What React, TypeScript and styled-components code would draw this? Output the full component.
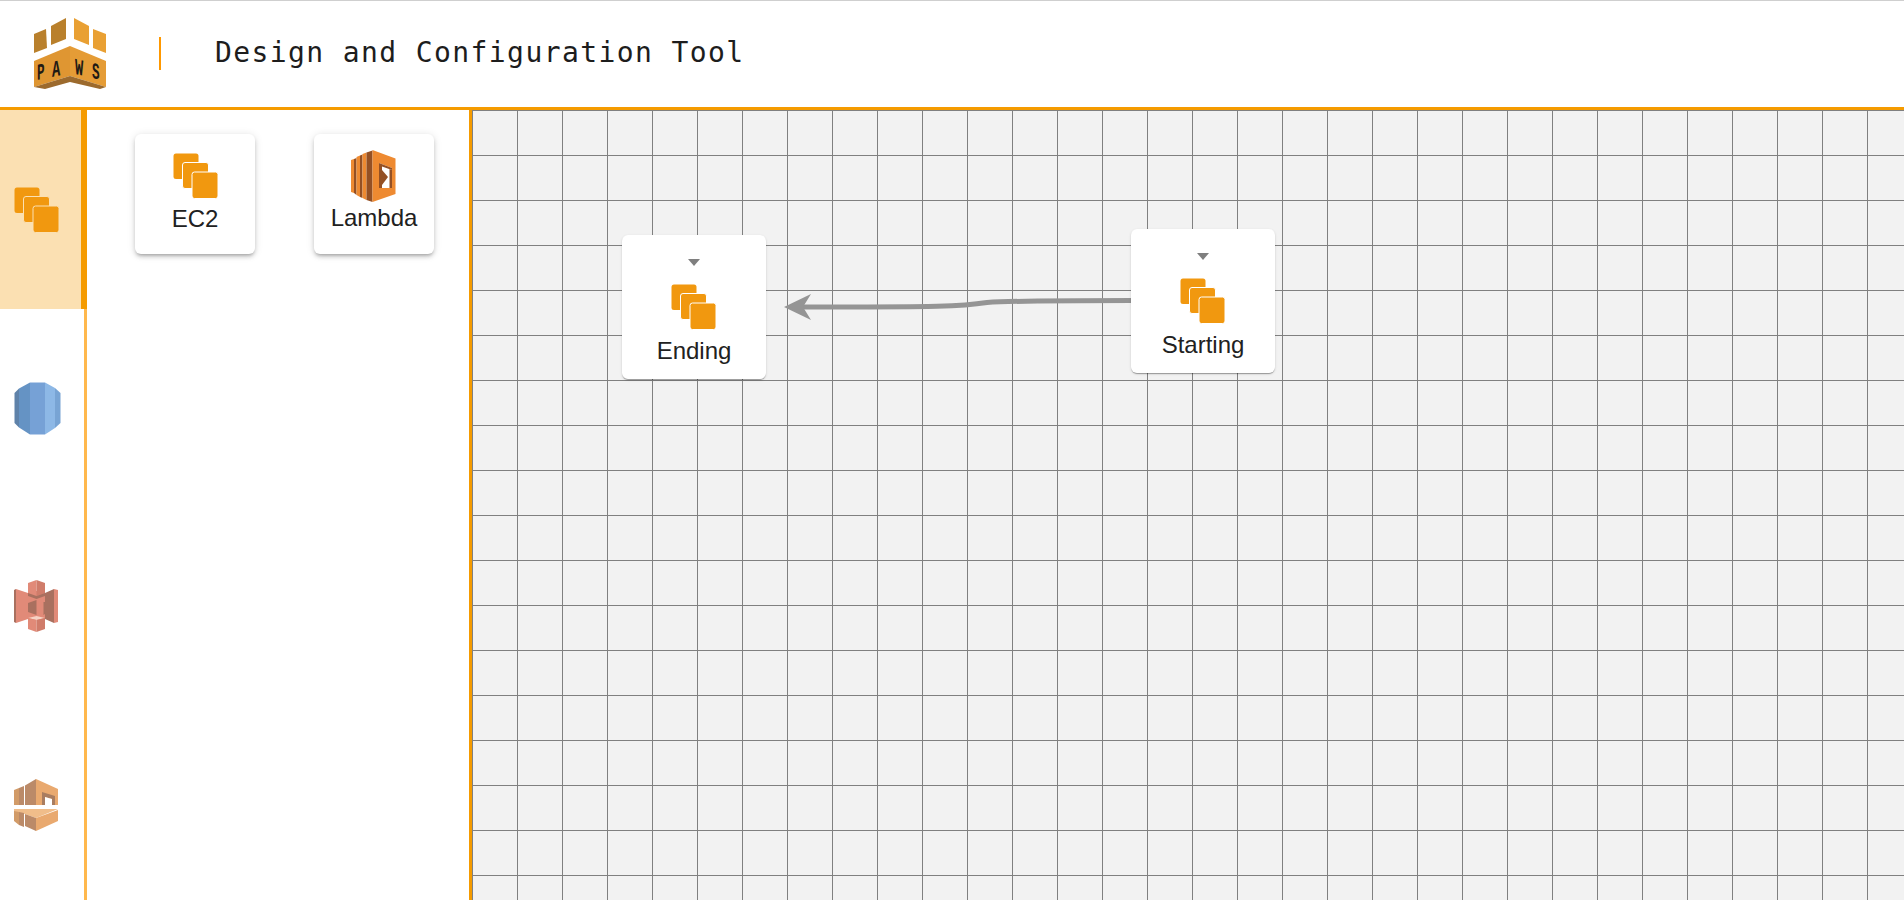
import React from "react";
import styled, { createGlobalStyle } from "styled-components";

const Global = createGlobalStyle`
  html, body { margin: 0; padding: 0; height: 100%; background: #fff; overflow: hidden; }
  #root { height: 100%; }
`;

const Page = styled.div`
  display: flex;
  flex-direction: column;
  height: 900px;
  width: 1904px;
  overflow: hidden;
`;

const Header = styled.header`
  flex: none;
  box-sizing: border-box;
  height: 110px;
  display: flex;
  align-items: center;
  padding: 0 0 0 34px;
  border-top: 1px solid #cfcfcf;
  border-bottom: 3px solid #f59b00;
  background: #fff;
`;

const LogoWrap = styled.div`
  width: 72px;
  height: 71px;
  margin-top: -2px;
`;

const Divider = styled.div`
  width: 2px;
  height: 33px;
  margin: -2px 0 0 53px;
  background: #ff9800;
`;

const Title = styled.h1`
  margin: -4px 0 0 54px;
  font: 400 28px "DejaVu Sans Mono", "Liberation Mono", monospace;
  color: #1d1d1d;
  white-space: nowrap;
  letter-spacing: 1.4px;
`;

const Body = styled.div`
  flex: 1;
  display: flex;
  min-height: 0;
`;

const Sidebar = styled.nav`
  flex: none;
  width: 87px;
  display: flex;
  flex-direction: column;
`;

const Tab = styled.div<{ $active?: boolean }>`
  flex: none;
  box-sizing: border-box;
  height: 198.7px;
  display: flex;
  align-items: center;
  padding-left: 14px;
  padding-top: ${(p) => (p.$active ? "2px" : "0")};
  background: ${(p) => (p.$active ? "#fbe0b2" : "#fff")};
  border-right: ${(p) => (p.$active ? "6px solid #f59b00" : "3px solid #ffb84d")};
`;

const Panel = styled.aside`
  flex: none;
  box-sizing: border-box;
  width: 382px;
  display: flex;
  align-items: flex-start;
  gap: 59px;
  padding: 24px 0 0 48px;
  background: #fff;
`;

const Tile = styled.div`
  flex: none;
  box-sizing: border-box;
  width: 120px;
  height: 120px;
  display: flex;
  flex-direction: column;
  align-items: center;
  padding-top: 19px;
  border-radius: 6px;
  background: #fff;
  box-shadow: 0 3px 3px -2px rgba(0, 0, 0, 0.2), 0 3px 4px 0 rgba(0, 0, 0, 0.14), 0 1px 8px 0 rgba(0, 0, 0, 0.12);
`;

const IconBox = styled.div`
  height: 45px;
  display: flex;
  align-items: flex-start;
  justify-content: center;
`;

const TileIconBox = styled(IconBox)`
  margin-left: 1px;
`;

const LambdaIconBox = styled(IconBox)`
  margin-top: -3px;
  height: 48px;
`;

const Label = styled.div<{ $gap: number }>`
  margin-top: ${(p) => p.$gap}px;
  font: 400 24px/28px "Liberation Sans", Arial, sans-serif;
  color: #212121;
`;

const Canvas = styled.main`
  flex: 1;
  position: relative;
  min-width: 0;
  overflow: hidden;
  border-left: 3px solid #f59b00;
  background-color: #f2f2f2;
  background-image:
    linear-gradient(to right, #808080 1px, transparent 1px),
    linear-gradient(to bottom, #808080 1px, transparent 1px);
  background-size: 45px 45px;
`;

const Wire = styled.svg`
  position: absolute;
  inset: 0;
  width: 100%;
  height: 100%;
`;

const Node = styled.div<{ $x: number; $y: number }>`
  position: absolute;
  left: ${(p) => p.$x}px;
  top: ${(p) => p.$y}px;
  box-sizing: border-box;
  width: 144px;
  height: 144px;
  display: flex;
  flex-direction: column;
  align-items: center;
  padding-top: 24px;
  border-radius: 6px;
  background: #fff;
  box-shadow: 0 2px 1px -1px rgba(0, 0, 0, 0.2), 0 1px 1px 0 rgba(0, 0, 0, 0.14), 0 1px 3px 0 rgba(0, 0, 0, 0.12);
`;

const Caret = styled.div`
  width: 0;
  height: 0;
  margin-bottom: 18px;
  border-left: 6px solid transparent;
  border-right: 6px solid transparent;
  border-top: 7px solid #7f7f7f;
`;

const Ec2Icon = ({ gap = "#fff" }: { gap?: string }) => (
  <svg width="46" height="46" viewBox="0 0 46 46">
    <rect x="0.5" y="0.5" width="25" height="25.5" rx="2.5" fill="#f1980f" />
    <rect x="9.5" y="9.5" width="26" height="26" rx="2.5" fill="#f1980f" stroke={gap} strokeWidth="1" />
    <rect x="19" y="19" width="26" height="26.5" rx="2.5" fill="#f1980f" stroke={gap} strokeWidth="1" />
  </svg>
);

const LambdaIcon = () => (
  <svg width="46" height="54" viewBox="0 0 46 54">
    <polygon points="0,10 3,9 3,43 0,42" fill="#ee8a31" />
    <polygon points="3,9 5.5,8 5.5,45 3,43" fill="#945024" />
    <polygon points="5.5,7 9,5.5 9,47 5.5,45" fill="#ee8a31" />
    <polygon points="9,5.5 11.5,4.5 11.5,48 9,47" fill="#945024" />
    <polygon points="11.5,4 15.5,2.5 15.5,50 11.5,48" fill="#ee8a31" />
    <polygon points="15.5,2.5 21.5,0.5 21.5,52 15.5,50" fill="#945024" />
    <polygon points="21.5,0 44.5,8.5 44.5,44 21.5,52" fill="#ee8a31" />
    <polygon points="28,13 41,18 41,38 28,38" fill="#fff" />
    <polygon points="28,13 41,18 41,20 31,16.5 31,38 28,38" fill="#945024" />
    <polygon points="38.5,19 41,20 41,38 38.5,38" fill="#945024" />
    <polygon points="31,20 37,27 31,35" fill="#945024" />
  </svg>
);

const RdsIcon = () => (
  <svg width="47" height="53" viewBox="0 0 47 53">
    <polygon points="0.5,11 5,6.5 5,45.5 0.5,41" fill="#5f82a9" />
    <polygon points="5,6.5 16,0.5 16,52.5 5,45.5" fill="#6593c4" />
    <polygon points="16,0.5 31,0.5 31,52.5 16,52.5" fill="#76a1d6" />
    <polygon points="31,0.5 41,6 41,46 31,52.5" fill="#8db8e6" />
    <polygon points="41,6 46.5,11 46.5,41 41,46" fill="#78a4d4" />
  </svg>
);

const S3Icon = () => (
  <svg width="46" height="54" viewBox="0 1 46 54">
    <polygon points="0,11 2,10 2,44 0,43" fill="#a9705f" />
    <polygon points="2,10 14,14 14,40 2,44" fill="#e18a78" />
    <polygon points="14,12 31,12 31,41 14,41" fill="#e18a78" />
    <polygon points="14,4 22.5,1 22.5,17 14,14" fill="#e18a78" />
    <polygon points="22.5,1 31,4 31,14 22.5,17" fill="#d07c6a" />
    <polygon points="14,14 22.5,17 31,14 31,17 22.5,20 14,17" fill="#a9705f" />
    <polygon points="14,24 22.5,21 22.5,36 14,33" fill="#a9705f" />
    <polygon points="29.5,23 31,23 31,35 29.5,36" fill="#a9705f" />
    <polygon points="31,14 40,10 40,44 31,40" fill="#a9705f" />
    <polygon points="40,10 44,11 44,43 40,44" fill="#e18a78" />
    <polygon points="14,39 22.5,37 31,39 22.5,41" fill="#f6d2c4" />
    <polygon points="14,39 22.5,41 22.5,53 14,50" fill="#e18a78" />
    <polygon points="22.5,41 31,39 31,50 22.5,53" fill="#d07c6a" />
  </svg>
);

const GatewayIcon = () => (
  <svg width="46" height="54" viewBox="0 0 46 54">
    <polygon points="0,12 5,10 5,27 0,27" fill="#d29b68" />
    <polygon points="5,10 10,8 10,27 5,27" fill="#bb8a68" />
    <polygon points="11,7.5 22,1 22,27 11,27" fill="#bb8a68" />
    <polygon points="22,1 44,11 44,27 22,27" fill="#e9a96f" />
    <polygon points="28,14 41,18 41,27 38,27 38,21 31,19 31,27 28,27" fill="#a97d60" />
    <polygon points="31,19 38,21 38,27 31,27" fill="#fff" />
    <polygon points="0,31 44,31 22,40 11,36 0,34" fill="#f0bd8a" />
    <polygon points="0,33 5,34 5,47 0,43" fill="#d29b68" />
    <polygon points="5,34 10,35 10,49 5,47" fill="#bb8a68" />
    <polygon points="11,36 22,40 22,53 11,48" fill="#bb8a68" />
    <polygon points="22,40 44,32 44,43 22,53" fill="#e9a96f" />
  </svg>
);

const Logo = () => (
  <svg width="72" height="71" viewBox="0 0 72 71">
    <polygon points="0,16 12,11 13,30 0,35" fill="#b9802c" />
    <polygon points="17,8 32,0 32,21 17,27" fill="#b9802c" />
    <polygon points="40,0 55,8 55,27 40,21" fill="#e9a033" />
    <polygon points="59,11 72,16 72,35 59,30" fill="#e9a033" />
    <polygon points="36,28 0,43 0,69 36,58" fill="#df9632" />
    <polygon points="36,28 72,43 72,69 36,58" fill="#e59c36" />
    <polygon points="0,69 36,58 72,69 66,71 36,64 11,71" fill="#9c6a2d" />
    <g fontFamily="'Liberation Mono', monospace" fontWeight="700" fill="#1f1a14" fontSize="23">
      <text transform="translate(3,62) skewY(-12) scale(0.55,1)">P</text>
      <text transform="translate(18,59) skewY(-12) scale(0.6,1)">A</text>
      <text transform="translate(41,56) skewY(12) scale(0.6,1)">W</text>
      <text transform="translate(58,60) skewY(12) scale(0.55,1)">S</text>
    </g>
  </svg>
);

const App = () => (
  <Page>
    <Global />
    <Header>
      <LogoWrap>
        <Logo />
      </LogoWrap>
      <Divider />
      <Title>Design and Configuration Tool</Title>
    </Header>
    <Body>
      <Sidebar>
        <Tab $active>
          <Ec2Icon gap="#fbe0b2" />
        </Tab>
        <Tab>
          <RdsIcon />
        </Tab>
        <Tab>
          <S3Icon />
        </Tab>
        <Tab>
          <GatewayIcon />
        </Tab>
      </Sidebar>
      <Panel>
        <Tile>
          <TileIconBox>
            <Ec2Icon />
          </TileIconBox>
          <Label $gap={7}>EC2</Label>
        </Tile>
        <Tile>
          <LambdaIconBox>
            <LambdaIcon />
          </LambdaIconBox>
          <Label $gap={6}>Lambda</Label>
        </Tile>
      </Panel>
      <Canvas>
        <Wire>
          <path
            d="M659 190.5 C 580 190.5 545 190.5 515 192.5 C 490 196.5 470 197 325 197"
            fill="none"
            stroke="#959595"
            strokeWidth="5"
          />
          <polygon points="312,197 339,184 331,197 339,210" fill="#959595" />
        </Wire>
        <Node $x={150} $y={125}>
          <Caret />
          <IconBox>
            <Ec2Icon />
          </IconBox>
          <Label $gap={8}>Ending</Label>
        </Node>
        <Node $x={659} $y={119}>
          <Caret />
          <IconBox>
            <Ec2Icon />
          </IconBox>
          <Label $gap={8}>Starting</Label>
        </Node>
      </Canvas>
    </Body>
  </Page>
);

export default App;
